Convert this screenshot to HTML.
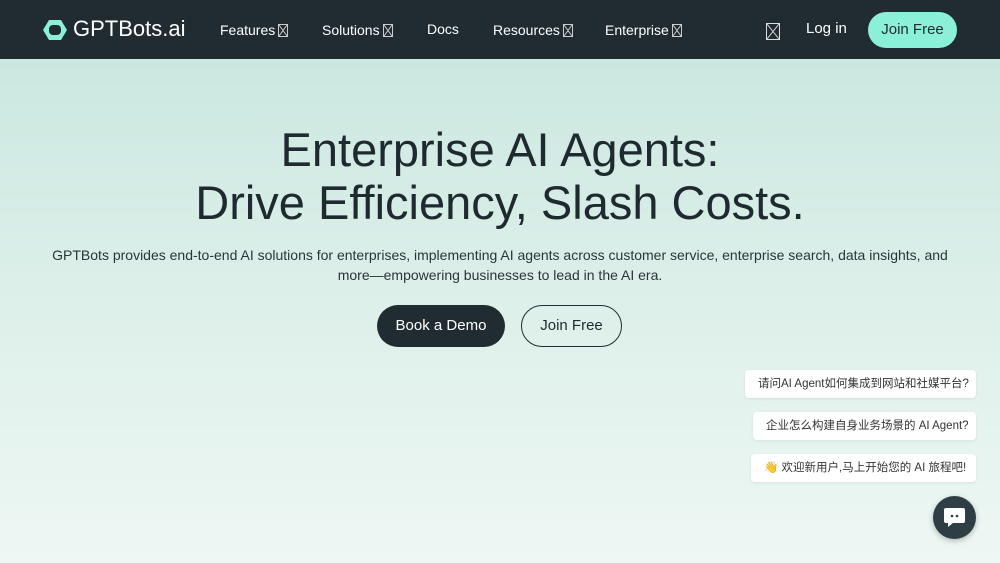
<!DOCTYPE html>
<html><head><meta charset="utf-8"><style>
*{margin:0;padding:0;box-sizing:border-box}
body{width:1000px;height:563px;overflow:hidden;font-family:"Liberation Sans","Noto Sans CJK SC",sans-serif;background:linear-gradient(180deg,#c6e6dd 0%,#dcefe9 50%,#eef7f4 100%);position:relative;color:#1f2a30}
.nav{height:59px;background:#212c32;position:relative;color:#fff;font-size:14px}
.nav span{position:absolute;top:22px}
.x{display:inline-block;width:10px;height:13px;vertical-align:-2px;margin-left:3px}
h1{position:absolute;top:123px;width:100%;text-align:center;font-weight:400;font-size:47px;line-height:53px;color:#1f2a30}
p.d{position:absolute;top:245px;left:0;right:0;text-align:center;font-size:14px;line-height:20px;color:#2a353a;white-space:nowrap}
.b{position:absolute;top:305px;height:42px;border-radius:21px;font-size:15px;line-height:42px;text-align:center}
.q{position:absolute;background:#fff;border-radius:4px;font-size:11.5px;color:#333;height:28px;line-height:28px;padding-left:13px;box-shadow:0 1px 3px rgba(0,0,0,.08);white-space:nowrap;overflow:hidden}
</style></head><body>
<div class="nav">
<svg style="position:absolute;left:41px;top:18px" width="28" height="24" viewBox="0 0 28 24"><path d="M8 2h12l6 10-6 10H8L2 12z" fill="#8af1d8"/><rect x="8" y="7" width="12" height="10" rx="4" fill="#212c32"/></svg>
<span style="left:73px;top:16px;font-size:22px">GPTBots.ai</span>
<span style="left:220px">Features<svg class="x" viewBox="0 0 10 13"><rect x=".5" y=".5" width="9" height="12" fill="none" stroke="#ccc"/><path d="M1 1l8 11M9 1L1 12" stroke="#ccc"/></svg></span>
<span style="left:322px">Solutions<svg class="x" viewBox="0 0 10 13"><rect x=".5" y=".5" width="9" height="12" fill="none" stroke="#ccc"/><path d="M1 1l8 11M9 1L1 12" stroke="#ccc"/></svg></span>
<span style="left:427px;top:21px">Docs</span>
<span style="left:493px">Resources<svg class="x" viewBox="0 0 10 13"><rect x=".5" y=".5" width="9" height="12" fill="none" stroke="#ccc"/><path d="M1 1l8 11M9 1L1 12" stroke="#ccc"/></svg></span>
<span style="left:605px">Enterprise<svg class="x" viewBox="0 0 10 13"><rect x=".5" y=".5" width="9" height="12" fill="none" stroke="#ccc"/><path d="M1 1l8 11M9 1L1 12" stroke="#ccc"/></svg></span>
<svg style="position:absolute;left:766px;top:23px" width="14" height="17" viewBox="0 0 14 17"><rect x=".5" y=".5" width="13" height="16" fill="none" stroke="#ddd"/><path d="M1 1l12 15M13 1L1 16" stroke="#ddd"/></svg>
<span style="left:806px;top:20px;font-size:15px">Log in</span>
<div style="position:absolute;left:868px;top:12px;width:89px;height:36px;border-radius:18px;background:#8af1d8;color:#212c32;font-size:15px;line-height:36px;text-align:center">Join Free</div>
</div>
<h1>Enterprise AI Agents:<br>Drive Efficiency, Slash Costs.</h1>
<p class="d">GPTBots provides end-to-end AI solutions for enterprises, implementing AI agents across customer service, enterprise search, data insights, and<br>more—empowering businesses to lead in the AI era.</p>
<div class="b" style="left:377px;width:128px;background:#212c32;color:#fff">Book a Demo</div>
<div class="b" style="left:521px;width:101px;border:1px solid #212c32;line-height:40px">Join Free</div>
<div class="q" style="left:745px;top:370px;width:231px">请问AI Agent如何集成到网站和社媒平台?</div>
<div class="q" style="left:753px;top:412px;width:223px">企业怎么构建自身业务场景的 AI Agent?</div>
<div class="q" style="left:751px;top:454px;width:225px">👋 欢迎新用户,马上开始您的 AI 旅程吧!</div>
<div style="position:absolute;left:933px;top:496px;width:43px;height:43px;border-radius:50%;background:#2f3e45;box-shadow:0 2px 6px rgba(0,0,0,.25)"><svg style="position:absolute;left:11px;top:12px" width="21" height="19" viewBox="0 0 21 19"><path d="M2 0h17a2 2 0 0 1 2 2v11a2 2 0 0 1-2 2H9l-5 4v-4H2a2 2 0 0 1-2-2V2a2 2 0 0 1 2-2z" fill="#fff"/><circle cx="8" cy="8" r="1.3" fill="#2f3e45"/><circle cx="13" cy="8" r="1.3" fill="#2f3e45"/></svg></div>
</body></html>
